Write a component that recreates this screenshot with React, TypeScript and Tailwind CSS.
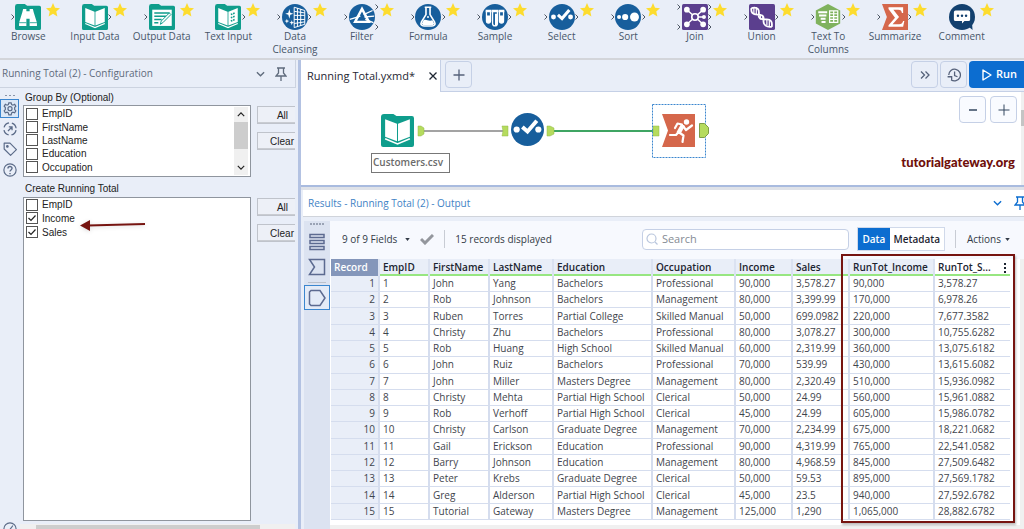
import { useState } from "react";
import type { ReactNode } from "react";

const TEAL = "#0f9d8c";
const BLUE = "#175e9c";
const PURPLE = "#5b3f8e";

function Folder({ children }: { children: ReactNode }) {
  return (
    <svg viewBox="0 0 32 32" className="w-full h-full" fill="#fff">
      <path d="M3 0h9l3 2h15a2 2 0 0 1 2 2v26a2 2 0 0 1-2 2H2a2 2 0 0 1-2-2V3a3 3 0 0 1 3-3z" fill={TEAL} />
      {children}
    </svg>
  );
}

function Disc({ color = BLUE, children }: { color?: string; children: ReactNode }) {
  return (
    <svg viewBox="0 0 32 32" className="w-full h-full" fill="#fff">
      <circle cx="16" cy="16" r="16" fill={color} />
      {children}
    </svg>
  );
}

function InputIcon() {
  return (
    <Folder>
      <path d="M4 5l11.500 4.500v17L4 22zM28 5l-11.500 4.500v17L28 22z" />
      <path d="M4 24l12 5 12-5" fill="none" stroke="#fff" strokeWidth="1.600" />
    </Folder>
  );
}

function SelectIcon() {
  return (
    <Disc>
      <circle cx="5.500" cy="16" r="3" />
      <circle cx="26.500" cy="16" r="3" />
      <path d="M11 13.500l5 4.500 9-10.500" fill="none" stroke="#fff" strokeWidth="3.800" />
    </Disc>
  );
}

const icons: Record<string, ReactNode> = {
  browse: (
    <Folder>
      <path d="M10 6h4v3h4V6h4l1 4 4 13v4h-9v-9h-4v9H5v-4l4-13z" />
      <path d="M5 23h9M18 23h9" stroke={TEAL} strokeWidth="1" />
    </Folder>
  ),
  input: <InputIcon />,
  output: (
    <Folder>
      <path d="M4 7h24v20H4z" />
      <path d="M6.500 11h19M6.500 15h15M6.500 19h9M6.500 23h5" stroke={TEAL} strokeWidth="1.800" />
      <path d="M27 13L17 23l-3 2 1-4 10-10z" stroke={TEAL} strokeWidth="1.200" />
    </Folder>
  ),
  text: (
    <Folder>
      <path d="M4 5l11.500 4.500v17L4 22zM28 5l-11.500 4.500v17L28 22z" />
      <path d="M4 24l12 5 12-5" fill="none" stroke="#fff" strokeWidth="1.600" />
      <path d="M19.500 13l5-2M19.500 17l5-2M19.500 21l5-2" stroke={TEAL} strokeWidth="2" strokeDasharray="2 1" />
    </Folder>
  ),
  cleansing: (
    <Disc>
      <path d="M15 4l13 4v17l-13 4zM19 5v23M23 6v21M15 9l13 2M15 14h13M15 19h13M15 24l13-2" fill="none" stroke="#fff" strokeWidth="1.200" />
      <path d="M9 6l1.200 4.800L14 12l-3.800 1.200L9 18l-1.200-4.800L4 12l3.800-1.200zM6 18l.8 2.200L9 21l-2.200.8L6 24l-.8-2.200L3 21l2.200-.8zM12 20l.8 2.200 2.200.8-2.200.8L12 26l-.8-2.200L9 23l2.200-.8z" />
    </Disc>
  ),
  filter: (
    <Disc>
      <path d="M16 6l8.500 16h-17z" fill="none" stroke="#fff" strokeWidth="3" />
      <path d="M1 19l13-4M18 13l11-5M19 16l12-1M20 19l10 4" stroke="#fff" strokeWidth="1.600" />
    </Disc>
  ),
  formula: (
    <Disc>
      <path d="M12 4h8M13.500 4v9L8 22c-1.500 3 0 5 3 5h10c3 0 4.500-2 3-5l-5.500-9V4" fill="none" stroke="#fff" strokeWidth="2" />
      <path d="M10.500 20c3-2 6 2 11 0l2 4c0 1-1 2-2.500 2H11c-1.500 0-2.500-1-2.500-2z" />
      <circle cx="16" cy="16" r="1.200" />
    </Disc>
  ),
  sample: (
    <Disc>
      <path d="M5.500 9v12a2.500 2.500 0 0 0 5 0V9zM13 9v15a3 3 0 0 0 6 0V9zM21.500 9v12a2.500 2.500 0 0 0 5 0V9z" fill="none" stroke="#fff" strokeWidth="1.600" />
      <path d="M4.500 7h7v3h-7zM12 7h8v3h-8zM20.500 7h7v3h-7zM5.500 14h5v7a2.500 2.500 0 0 1-5 0zM16 12h3v12a3 3 0 0 1-3 3zM21.500 14h5v7a2.500 2.500 0 0 1-5 0z" />
    </Disc>
  ),
  select: <SelectIcon />,
  sort: (
    <Disc>
      <circle cx="5" cy="16" r="2.500" />
      <circle cx="12.500" cy="16" r="3.800" />
      <circle cx="24" cy="16" r="5.500" />
    </Disc>
  ),
  join: (
    <svg viewBox="0 0 32 32" className="w-full h-full">
      <rect width="32" height="32" rx="2" fill={PURPLE} />
      <path d="M6 7l20 18M26 7L6 25M16 16h10" stroke="#fff" strokeWidth="1.800" />
      <g fill="#fff">
        <circle cx="6" cy="7" r="3.500" />
        <circle cx="6" cy="25" r="3.500" />
        <circle cx="26" cy="7" r="3.500" />
        <circle cx="26" cy="25" r="3.500" />
        <circle cx="27" cy="16" r="2.500" />
      </g>
      <circle cx="16" cy="16" r="4" fill={PURPLE} stroke="#fff" strokeWidth="2" />
    </svg>
  ),
  union: (
    <svg viewBox="0 0 32 32" className="w-full h-full" fill="none" stroke="#fff">
      <rect width="32" height="32" rx="2" fill={PURPLE} stroke="none" />
      <path d="M3 5c8-2 10 2 9 8s5 6 10 6 7 3 6 9M3 5c-1 6 2 8 7 8s9 1 8 7 4 9 10 8" strokeWidth="2.200" />
      <path d="M6 4v8M9 4v9M14 13v6M17 14v6M22 19v7M25 20v8" strokeWidth="1.500" />
    </svg>
  ),
  columns: (
    <svg viewBox="0 0 32 32" className="w-full h-full">
      <path d="M16 0l15 8v16l-15 8L1 24V8z" fill="#7fb25d" />
      <path d="M4 9h11v2.500H4zM5 13h9v2.500H5zM7 17h6v2.500H7zM8 21h5v2.500H8z" fill="#fff" />
      <path d="M18 8.500h10v14H18zM18 12h10M18 15.500h10M18 19h10M23 9v13" fill="none" stroke="#fff" strokeWidth="1.500" />
    </svg>
  ),
  summarize: (
    <svg viewBox="0 0 32 32" className="w-full h-full">
      <path d="M0 0h32v32H0l6-16z" fill="#d5674b" />
      <path d="M8 4h18v7h-1.500C24 8 23 7 20 7h-6l7 9-8 9h8c3 0 4-1 5-4h1.500L26 28H8v-2l8-9L8 6z" fill="#fff" />
    </svg>
  ),
  comment: (
    <Disc color="#12406f">
      <path d="M22 26l7 6-1-12z" fill="#12406f" />
      <path d="M8 8h16a2 2 0 0 1 2 2v9a2 2 0 0 1-2 2h-5l-3 3v-3H8a2 2 0 0 1-2-2v-9a2 2 0 0 1 2-2z" />
      <g fill="#12406f">
        <circle cx="11" cy="14.500" r="1.500" />
        <circle cx="16" cy="14.500" r="1.500" />
        <circle cx="21" cy="14.500" r="1.500" />
      </g>
    </Disc>
  ),
};

type Tool = { icon: string; label: string; ins: number; outs: number };

const tools: Tool[] = [
  { icon: "browse", label: "Browse", ins: 1, outs: 0 },
  { icon: "input", label: "Input Data", ins: 0, outs: 1 },
  { icon: "output", label: "Output Data", ins: 1, outs: 0 },
  { icon: "text", label: "Text Input", ins: 0, outs: 1 },
  { icon: "cleansing", label: "Data Cleansing", ins: 1, outs: 1 },
  { icon: "filter", label: "Filter", ins: 1, outs: 2 },
  { icon: "formula", label: "Formula", ins: 1, outs: 1 },
  { icon: "sample", label: "Sample", ins: 1, outs: 1 },
  { icon: "select", label: "Select", ins: 1, outs: 1 },
  { icon: "sort", label: "Sort", ins: 1, outs: 1 },
  { icon: "join", label: "Join", ins: 2, outs: 3 },
  { icon: "union", label: "Union", ins: 1, outs: 1 },
  { icon: "columns", label: "Text To Columns", ins: 1, outs: 1 },
  { icon: "summarize", label: "Summarize", ins: 1, outs: 1 },
  { icon: "comment", label: "Comment", ins: 0, outs: 0 },
];

// connection anchors drawn on either side of a tool icon
function Anchors({ count }: { count: number }) {
  return (
    <span className={`w-[5px] h-full flex flex-col items-center ${count > 1 ? "justify-between" : "justify-center"}`}>
      {Array.from({ length: count }, (_, i) => (
        <svg key={i} viewBox="0 0 4 6" className="w-1 h-1.5" fill="none" stroke="#4d5663">
          <path d="M.5.5L3 3 .5 5.500" />
        </svg>
      ))}
    </span>
  );
}

function ToolButton({ tool }: { tool: Tool }) {
  return (
    <button className="relative flex flex-col items-center pt-1">
      <span className="flex h-[26px]">
        <Anchors count={tool.ins} />
        <span className="w-[26px] h-[26px]">{icons[tool.icon]}</span>
        <Anchors count={tool.outs} />
      </span>
      <span className={`text-[10px] leading-[13px] text-[#48566a] ${tool.label.length > 12 ? "w-14" : "whitespace-nowrap"}`}>
        {tool.label}
      </span>
      <svg viewBox="0 0 24 24" className="absolute left-1/2 ml-[18px] top-[3px] w-3.5 h-3.5" fill="#fddc2e">
        <path d="M12 0l3.500 8 8.500.8-6.400 5.800L19.500 23 12 18.600 4.500 23l1.900-8.400L0 8.800 8.500 8z" />
      </svg>
    </button>
  );
}

function Pin({ className }: { className: string }) {
  return (
    <svg viewBox="0 0 12 14" className={className} fill="none" stroke="currentColor" strokeWidth="1.300">
      <path d="M2 1h8M3.500 1v5L1 9h10L8.500 6V1M6 9v5" />
    </svg>
  );
}

function Chevron({ className }: { className: string }) {
  return (
    <svg viewBox="0 0 10 6" className={className} fill="none" stroke="currentColor" strokeWidth="1.500">
      <path d="M1 1l4 4 4-4" />
    </svg>
  );
}

function CheckRow({ name, group, initial = false }: { name: string; group: string; initial?: boolean }) {
  const [checked, setChecked] = useState(initial);
  const id = `${group}-${name}`;
  return (
    <div className="flex items-center gap-1">
      <span className="relative w-3 h-3">
        <input
          id={id}
          type="checkbox"
          checked={checked}
          onChange={() => setChecked(!checked)}
          className="block appearance-none w-3 h-3 bg-white border border-[#555]"
        />
        {checked && (
          <svg viewBox="0 0 12 12" className="absolute inset-0 w-3 h-3 pointer-events-none" fill="none" stroke="#222" strokeWidth="1.200">
            <path d="M2.500 6l2.500 2.500 4.500-5" />
          </svg>
        )}
      </span>
      <label htmlFor={id}>{name}</label>
    </div>
  );
}

function SideButtons() {
  return (
    <div className="w-[38px] pt-px flex flex-col gap-2">
      {["All", "Clear"].map((label) => (
        <button
          key={label}
          className="h-[18px] pr-px text-right border border-r-0 border-[#bfc3cb] shadow-[inset_0_-1px_0_#c9ccd2] bg-[#edf0f7]"
        >
          <span className={label === "All" ? "pr-1.5" : ""}>{label}</span>
        </button>
      ))}
    </div>
  );
}

function ConfigPanel() {
  return (
    <aside className="w-[298px] shrink-0 flex flex-col bg-[#e9eef8]">
      <header className="h-7 mr-0.5 flex items-center pl-0.5 pr-2 border-b border-r border-[#ccd3e0] text-[#5f6b7c]">
        <h2 className="flex-1 text-[10px]">Running Total (2) - Configuration</h2>
        <button aria-label="Collapse" className="mr-2.5">
          <Chevron className="w-[9px] h-1.5" />
        </button>
        <button aria-label="Pin">
          <Pin className="w-3 h-3.5" />
        </button>
      </header>
      <div className="flex-1 min-h-0 flex">
        <nav className="w-5 shrink-0 flex flex-col items-center text-[#5b6b88]">
          <span className="h-[11px] flex items-center gap-0.5 pt-1">
            <i className="w-0.5 h-px bg-[#8b95a8]" />
            <i className="w-0.5 h-px bg-[#8b95a8]" />
            <i className="w-0.5 h-px bg-[#8b95a8]" />
          </span>
          <button aria-label="Configuration" className="w-[19px] h-[19px] self-start grid place-items-center border border-[#3b86cf] bg-[#dbe8f7]">
            <svg viewBox="0 0 24 24" className="w-3.5 h-3.5" fill="none" stroke="currentColor" strokeWidth="2">
              <path d="M10 1.500h4l.8 3 2.200 1 3-1.500 2 3.300-2 2.200v3.500l2 2.200-2 3.300-3-1-2.200 1.200-.8 3.300h-4l-.8-3.300L7 17.500l-3 1-2-3.300L4 13V9.500L2 7.300 4 4l3 1.500 2.200-1z" />
              <circle cx="12" cy="11.500" r="3.500" />
            </svg>
          </button>
          <button aria-label="Navigation" className="mt-1 mb-1.5">
            <svg viewBox="0 0 24 24" className="w-3.5 h-3.5" fill="none" stroke="currentColor" strokeWidth="2.200">
              <circle cx="12" cy="12" r="10.500" strokeDasharray="11.500 5" strokeDashoffset="-2" />
              <path d="M8.500 15.500l6-6M10 8.500h5.500V14" />
            </svg>
          </button>
          <button aria-label="Annotation" className="mb-[7px]">
            <svg viewBox="0 0 24 24" className="w-3.5 h-3.5" fill="none" stroke="currentColor" strokeWidth="2">
              <path d="M2 2h10l11 11-10 10L2 12z" strokeLinejoin="round" />
              <circle cx="7.500" cy="7.500" r="1.300" fill="currentColor" />
            </svg>
          </button>
          <button aria-label="Help">
            <svg viewBox="0 0 24 24" className="w-3.5 h-3.5" fill="none" stroke="currentColor" strokeWidth="2">
              <circle cx="12" cy="12" r="10.500" />
              <path d="M8.500 9.500c0-4.500 7-4.500 7-.3 0 2.800-3.500 2.600-3.500 5.500M12 17v2.200" strokeWidth="2.400" />
            </svg>
          </button>
          <span className="mt-auto h-[7px] overflow-hidden">
            <svg viewBox="0 0 24 24" className="w-3.5 h-3.5" fill="none" stroke="currentColor" strokeWidth="2">
              <circle cx="12" cy="12" r="10.500" />
              <path d="M11 14l6-8" />
            </svg>
          </span>
        </nav>
        <div className="flex-1 min-w-0 mr-[3px] flex flex-col font-['Liberation_Sans',Arial,sans-serif] text-[10px] leading-[13px] text-[#222]">
          <div className="flex-1 min-h-0 flex flex-col pl-[3px]">
            <p className="pt-[3px] pb-px pl-0.5">Group By (Optional)</p>
            <div className="h-[72px] flex gap-1.5">
              <div className="flex-1 flex bg-white border border-[#8f959e]">
                <div className="flex-1 pl-0.5 grid grid-rows-5 pt-px pb-0.5">
                  {["EmpID", "FirstName", "LastName", "Education", "Occupation"].map((f) => (
                    <CheckRow key={f} group="group" name={f} />
                  ))}
                </div>
                <div className="w-3.5 mr-0.5 my-px bg-[#f0f0f0] flex flex-col items-center text-[#222]">
                  <Chevron className="w-2 h-[15px] rotate-180 shrink-0" />
                  <span className="w-3.5 h-[27px] bg-[#cdcdcd]" />
                  <Chevron className="w-2 h-[15px] mt-auto shrink-0" />
                </div>
              </div>
              <SideButtons />
            </div>
            <p className="pt-[5px] pb-0.5 pl-0.5">Create Running Total</p>
            <div className="flex-1 flex gap-1.5 mb-[3px]">
              <div className="flex-1 pl-0.5 bg-white border border-[#8f959e]">
                <div className="h-[41px] grid grid-rows-3">
                  <CheckRow group="total" name="EmpID" />
                  <CheckRow group="total" name="Income" initial />
                  <CheckRow group="total" name="Sales" initial />
                </div>
              </div>
              <SideButtons />
            </div>
          </div>
          <div className="h-[5px] bg-[#f0f0f0] pt-px">
            <div className="h-1 ml-4 mr-[35px] bg-[#cdcdcd]" />
          </div>
        </div>
      </div>
    </aside>
  );
}

function TabBar() {
  const box = "w-[27px] h-[27px] grid place-items-center border border-[#c5d0e6] rounded-sm text-[#55617a]";
  return (
    <div className="h-8 flex bg-[#e9eef8]">
      <div className="w-[139px] flex items-center pl-1.5 pr-[3px] bg-white text-[#1f2733]">
        <span className="flex-1 text-[11px] whitespace-nowrap">Running Total.yxmd*</span>
        <button aria-label="Close tab">
          <svg viewBox="0 0 8 8" className="w-2 h-2" stroke="currentColor" strokeWidth="1.300">
            <path d="M.5.5l7 7M7.500.5l-7 7" />
          </svg>
        </button>
      </div>
      <div className="flex-1 flex items-start gap-0.5 pl-1 pt-px border-b border-l border-[#c5d0e6]">
        <button aria-label="New tab" className={box}>
          <svg viewBox="0 0 12 12" className="w-3 h-3" stroke="currentColor" strokeWidth="1.300">
            <path d="M6 .5v11M.5 6h11" />
          </svg>
        </button>
        <button aria-label="More tabs" className={`${box} ml-auto`}>
          <svg viewBox="0 0 10 8" className="w-2.5 h-2" fill="none" stroke="currentColor" strokeWidth="1.300">
            <path d="M1 .5L4.500 4 1 7.500M5.500.5L9 4 5.500 7.500" />
          </svg>
        </button>
        <button aria-label="History" className={box}>
          <svg viewBox="0 0 24 24" className="w-3.5 h-3.5" fill="none" stroke="currentColor" strokeWidth="2.200">
            <path d="M3 12a10 10 0 1 1 4 8M13 6v7l5 2M1 15h7v7" />
          </svg>
        </button>
        <button className="w-[55px] h-[27px] flex items-center justify-center gap-1 pl-1.5 rounded-l-sm bg-[#0c6dd0] text-white font-semibold text-[11px]">
          <svg viewBox="0 0 10 12" className="w-2.5 h-3" fill="none" stroke="currentColor" strokeWidth="1.400">
            <path d="M1 1l8 5-8 5z" strokeLinejoin="round" />
          </svg>
          Run
        </button>
      </div>
    </div>
  );
}

function Canvas() {
  const zoomBtn = "w-[27px] h-[27px] grid place-items-center bg-[#f9fbff] border border-[#c5d0e6] rounded-sm text-[#33475f]";
  return (
    <div className="relative h-[93px] bg-white overflow-hidden">
      <svg className="absolute left-0 top-0 w-full h-full" fill="none">
        <path d="M123 39H204" stroke="#a3a3a3" strokeWidth="2" />
        <path d="M253 39H356" stroke="#3fa563" strokeWidth="2" />
        <g fill="#b5db5e" stroke="#93b84a" strokeWidth=".5">
          <path d="M117 34h3l3 2v6l-3 2h-3z" />
          <path d="M201 34h6v10h-6l1-5z" />
          <path d="M246 34h3l4 2v6l-4 2h-3z" />
          <path d="M352 34h6v10h-6z" />
        </g>
        <rect x="351.500" y="12.500" width="53" height="53" stroke="#3b86cf" strokeDasharray="2 1" />
        <path d="M398.500 31.500h5l4 4v6l-4 4h-5z" fill="#b5db5e" stroke="#7e9d48" />
      </svg>
      <div className="absolute left-20 top-[22px] w-[33px] h-[33px]">
        <InputIcon />
      </div>
      <div className="absolute left-[210px] top-[21px] w-[33px] h-[33px]">
        <SelectIcon />
      </div>
      <svg viewBox="0 0 33 33" className="absolute left-[361px] top-[22px] w-[33px] h-[33px]" fill="none" stroke="#fff">
        <path d="M0 0h33v33H0l6-16.500z" fill="#d5674b" stroke="none" />
        <circle cx="24.500" cy="8" r="2.700" fill="#fff" stroke="none" />
        <path d="M21 11l-4.500 8" strokeWidth="4.500" />
        <path d="M20 10.500l-4.500-1-2.500 4.500M21 12l3 4 6-4.500M16.500 18l-2.500 3H8M16.500 18l5 3.500-1 6.500" strokeWidth="2.200" strokeLinejoin="round" strokeLinecap="round" />
      </svg>
      <div className="absolute left-[70px] top-[61px] w-[79px] h-[20px] pl-px border border-[#777] text-[10px] leading-[17px] font-semibold text-[#6b6b6b]">
        Customers.csv
      </div>
      <div className="absolute right-[7px] top-1 flex gap-1">
        <button aria-label="Zoom out" className={zoomBtn}>
          <svg viewBox="0 0 12 12" className="w-3 h-3" stroke="currentColor" strokeWidth="1.500">
            <path d="M2 6h8" />
          </svg>
        </button>
        <button aria-label="Zoom in" className={zoomBtn}>
          <svg viewBox="0 0 12 12" className="w-3 h-3" stroke="currentColor">
            <path d="M6 .5v11M.5 6h11" />
          </svg>
        </button>
      </div>
      <span className="absolute right-[9px] top-[62px] font-['Lato',sans-serif] font-black text-[13px] leading-4 text-[#6f0f0a]">
        tutorialgateway.org
      </span>
      <div className="absolute right-0 top-0 w-[3px] h-full bg-[#f0f0f0] pt-[18px]">
        <div className="h-4 bg-[#c4c4c4]" />
      </div>
    </div>
  );
}

const columns = [
  { name: "EmpID", width: "w-[50px]" },
  { name: "FirstName", width: "w-[60px]" },
  { name: "LastName", width: "w-[64px]" },
  { name: "Education", width: "w-[99px]" },
  { name: "Occupation", width: "w-[83px]" },
  { name: "Income", width: "w-[57px]" },
  { name: "Sales", width: "w-[57px]" },
  { name: "RunTot_Income", width: "w-[85px]" },
  { name: "RunTot_S...", width: "w-[76px]" },
];

const records = [
  ["1", "John", "Yang", "Bachelors", "Professional", "90,000", "3,578.27", "90,000", "3,578.27"],
  ["2", "Rob", "Johnson", "Bachelors", "Management", "80,000", "3,399.99", "170,000", "6,978.26"],
  ["3", "Ruben", "Torres", "Partial College", "Skilled Manual", "50,000", "699.0982", "220,000", "7,677.3582"],
  ["4", "Christy", "Zhu", "Bachelors", "Professional", "80,000", "3,078.27", "300,000", "10,755.6282"],
  ["5", "Rob", "Huang", "High School", "Skilled Manual", "60,000", "2,319.99", "360,000", "13,075.6182"],
  ["6", "John", "Ruiz", "Bachelors", "Professional", "70,000", "539.99", "430,000", "13,615.6082"],
  ["7", "John", "Miller", "Masters Degree", "Management", "80,000", "2,320.49", "510,000", "15,936.0982"],
  ["8", "Christy", "Mehta", "Partial High School", "Clerical", "50,000", "24.99", "560,000", "15,961.0882"],
  ["9", "Rob", "Verhoff", "Partial High School", "Clerical", "45,000", "24.99", "605,000", "15,986.0782"],
  ["10", "Christy", "Carlson", "Graduate Degree", "Management", "70,000", "2,234.99", "675,000", "18,221.0682"],
  ["11", "Gail", "Erickson", "Education", "Professional", "90,000", "4,319.99", "765,000", "22,541.0582"],
  ["12", "Barry", "Johnson", "Education", "Management", "80,000", "4,968.59", "845,000", "27,509.6482"],
  ["13", "Peter", "Krebs", "Graduate Degree", "Clerical", "50,000", "59.53", "895,000", "27,569.1782"],
  ["14", "Greg", "Alderson", "Partial High School", "Clerical", "45,000", "23.5", "940,000", "27,592.6782"],
  ["15", "Tutorial", "Gateway", "Masters Degree", "Management", "125,000", "1,290", "1,065,000", "28,882.6782"],
];

function ResultsTable() {
  return (
    <table className="w-full h-[261px] table-fixed border-collapse text-[10px] leading-[13px] text-left whitespace-nowrap text-[#3f454d]">
      <thead>
        <tr className="h-[17px] text-[#1c2430]">
          <th className="w-12 px-[3px] bg-[#8496ba] text-white font-semibold">Record</th>
          {columns.map((c, i) => (
            <th
              key={c.name}
              className={`${c.width} pl-[3px] border-l-2 border-[#dbe2f1] font-semibold shadow-[inset_0_-2px_0_#97e681] ${i === 8 ? "bg-white" : "bg-[#e9eef8]"}`}
            >
              {i === 8 ? (
                <span className="flex items-center justify-between pr-1">
                  {c.name}
                  <svg viewBox="0 0 2 10" className="w-0.5 h-2.5" fill="#1c2430">
                    <path d="M0 0h2v2H0zM0 4h2v2H0zM0 8h2v2H0z" />
                  </svg>
                </span>
              ) : (
                c.name
              )}
            </th>
          ))}
        </tr>
      </thead>
      <tbody>
        {records.map((row) => (
          <tr key={row[0]}>
            <th className="pr-[3px] text-right font-normal bg-[#e9eef8] border-b border-[#d5ddee]">{row[0]}</th>
            {row.map((cell, i) => (
              <td key={i} className="pl-[3px] bg-white border-l-2 border-b border-[#d5ddee]">
                {cell}
              </td>
            ))}
          </tr>
        ))}
      </tbody>
    </table>
  );
}

function Results() {
  const [query, setQuery] = useState("");
  return (
    <section className="flex-1 min-h-0 flex flex-col bg-[#e9eef8]">
      <header className="h-[27px] ml-0.5 flex items-center pl-[5px] bg-white border-b border-[#d0d4db] text-[#3f83c5] overflow-hidden">
        <h2 className="flex-1 text-[10px]">Results - Running Total (2) - Output</h2>
        <button aria-label="Collapse results" className="mr-3">
          <Chevron className="w-[9px] h-1.5 text-[#0c6dd0]" />
        </button>
        <button aria-label="Pin results" className="w-2.5 overflow-hidden">
          <Pin className="w-3 h-3.5 text-[#0c6dd0]" />
        </button>
      </header>
      <div className="flex-1 min-h-0 flex pt-1 pl-[3px]">
        <nav className="w-[26px] shrink-0 flex flex-col items-center bg-[#dce3f1] text-[#5c6a90]">
          <span className="flex gap-px mt-0.5 mb-2">
            {[0, 1, 2, 3, 4].map((n) => (
              <i key={n} className="w-0.5 h-0.5 bg-[#9aa3b5]" />
            ))}
          </span>
          <button aria-label="Messages">
            <svg viewBox="0 0 16 18" className="w-4 h-[18px]" fill="none" stroke="currentColor" strokeWidth="1.500">
              <path d="M1 1.500h14v3H1zM1 7.500h14v3H1zM1 13.500h14v3H1z" />
            </svg>
          </button>
          <button aria-label="Input anchor" className="mt-[7px] pb-1.5 border-b border-[#bcc1cb]">
            <svg viewBox="0 0 18 18" className="w-[18px] h-[18px]" fill="none" stroke="currentColor" strokeWidth="1.500">
              <path d="M1.500 1.500h15v15h-15l5-7.500z" />
            </svg>
          </button>
          <button aria-label="Output anchor" className="mt-0.5 w-[26px] h-[25px] grid place-items-center border border-[#3b86cf] bg-[#e4ebf7]">
            <svg viewBox="0 0 18 18" className="w-[18px] h-[18px]" fill="none" stroke="currentColor" strokeWidth="1.500">
              <path d="M3 1.500h9L17 9l-5 7.500H3L1.500 15V3z" />
            </svg>
          </button>
        </nav>
        <div className="flex-1 min-w-0 flex flex-col bg-[#f7f9fe]">
          <div className="h-[38px] flex items-center pl-3 pr-3.5 pb-0.5 text-[10px] text-[#333b47]">
            <button className="flex items-center gap-2 whitespace-nowrap">
              9 of 9 Fields
              <svg viewBox="0 0 6 4" className="w-[5px] h-[3px]" fill="currentColor">
                <path d="M0 0h6L3 4z" />
              </svg>
            </button>
            <svg viewBox="0 0 14 11" className="ml-2.5 w-3.5 h-[11px]" fill="none" stroke="#94979d" strokeWidth="3">
              <path d="M1 5l4 4 8-8" />
            </svg>
            <span className="ml-2.5 pl-2.5 h-[18px] leading-[18px] border-l border-[#c8ccd4] whitespace-nowrap">15 records displayed</span>
            <label className="ml-auto w-[207px] h-[21px] flex items-center gap-1 pl-[3px] bg-white border border-[#c5d0e6] rounded-sm">
              <svg viewBox="0 0 12 12" className="w-3 h-3" fill="none" stroke="#b9c6dd" strokeWidth="1.200">
                <circle cx="5.500" cy="5.500" r="4.500" />
                <path d="M9 9l2.500 2.500" />
              </svg>
              <input
                value={query}
                onChange={(e) => setQuery(e.target.value)}
                placeholder="Search"
                aria-label="Search"
                className="w-40 h-4 text-[11px] outline-none placeholder:text-[#858b94]"
              />
            </label>
            <div className="ml-2 h-6 flex border border-[#d0d9ea] bg-white font-semibold text-[#1c2430]">
              <button className="w-8 bg-[#0c6dd0] text-white">Data</button>
              <button className="w-[54px]">Metadata</button>
            </div>
            <button className="ml-2.5 pl-[11px] h-[18px] flex items-center gap-1 border-l border-[#c8ccd4]">
              Actions
              <svg viewBox="0 0 6 4" className="w-[5px] h-[3px]" fill="currentColor">
                <path d="M0 0h6L3 4z" />
              </svg>
            </button>
          </div>
          <div className="flex-1 min-h-0 relative pl-px pr-3.5 bg-white">
            <ResultsTable />
            <div className="absolute -top-[5px] right-[9px] w-[174px] h-[269px] border-2 border-[#761410] shadow-[1px_2px_2px_#0004] pointer-events-none" />
            <div className="absolute right-0 top-0 w-1 h-full bg-[#f0f0f0]" />
          </div>
          <div className="h-1 bg-[#f0f0f0]" />
        </div>
      </div>
    </section>
  );
}

export default function App() {
  return (
    <div className="relative h-screen flex flex-col overflow-hidden bg-[#e9eef8] font-['Open_Sans','Noto_Sans',sans-serif]">
      <div className="h-[60px] shrink-0 border-b-2 border-[#d3d5da]">
        <div className="grid grid-cols-15 -ml-[5px] mr-[29px]">
          {tools.map((t) => (
            <ToolButton key={t.label} tool={t} />
          ))}
        </div>
      </div>
      <div className="flex-1 min-h-0 flex">
        <ConfigPanel />
        <main className="flex-1 min-w-0 flex flex-col border-l-[3px] border-[#b3c2e2]">
          <TabBar />
          <Canvas />
          <div className="h-[5px] shrink-0 bg-[#dfe2e8] border-t-2 border-[#a9bbdf]" />
          <Results />
        </main>
      </div>
      <svg viewBox="0 0 66 14" className="absolute left-20 top-[218px] w-[66px] h-3.5 drop-shadow-sm pointer-events-none">
        <path d="M8 7.500L65 6" stroke="#761410" strokeWidth="2" />
        <path d="M0 7.500L10 2v11z" fill="#761410" />
      </svg>
    </div>
  );
}
